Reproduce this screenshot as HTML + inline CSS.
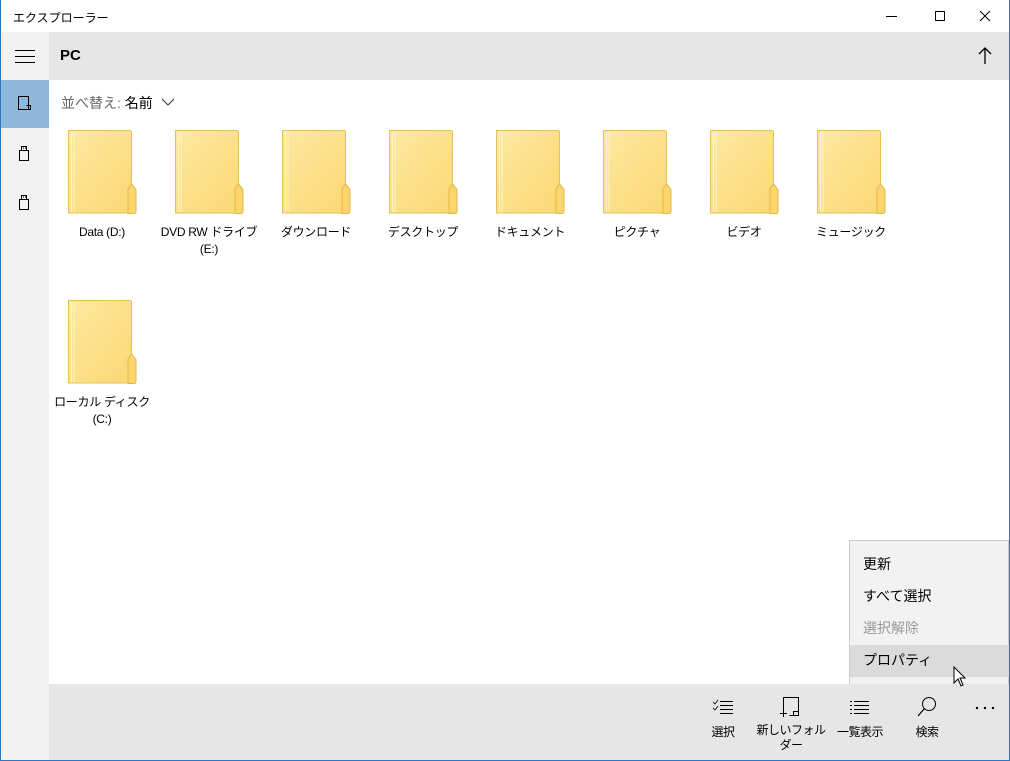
<!DOCTYPE html>
<html><head><meta charset="utf-8"><style>
*{margin:0;padding:0;box-sizing:border-box}
body{width:1010px;height:761px;overflow:hidden;background:#fff;font-family:"Liberation Sans","Noto Sans CJK JP",sans-serif;color:#000;position:relative}
.win{position:absolute;left:0;top:0;width:1010px;height:761px;border:1px solid #2b79c2;border-top:none}
.abs{position:absolute}
.title{left:13px;top:9px;font-size:12px}
.side{left:1px;top:32px;width:48px;height:728px;background:#f2f2f2}
.hdr{left:49px;top:32px;width:960px;height:48px;background:#e6e6e6}
.sel{left:1px;top:80px;width:48px;height:48px;background:#90b8da}
.fold{width:69px;height:85px}
.lbl{width:100px;font-size:12px;text-align:center;line-height:17px;letter-spacing:-0.3px;white-space:nowrap}
.bot{left:49px;top:684px;width:960px;height:76px;background:#e6e6e6}
.menu{left:849px;top:540px;width:160px;height:144px;background:#f2f2f2;border:1px solid #ccc;border-bottom:none}
.mi{position:absolute;left:13px;font-size:14px}
.bl{font-size:12px;text-align:center;position:absolute;white-space:nowrap;letter-spacing:-0.5px}
</style></head><body>
<div class="win"></div>
<div class="abs title">エクスプローラー</div>
<svg class="abs" style="left:880px;top:8px" width="120" height="18"><path d="M6 8.5h11" stroke="#000"/><rect x="55.5" y="3.5" width="9" height="9" fill="none" stroke="#000"/><path d="M100 3l10 10M110 3l-10 10" stroke="#000"/></svg>
<div class="abs side"></div>
<div class="abs hdr"></div>
<div class="abs sel"></div>
<svg class="abs" style="left:14px;top:48px" width="22" height="16"><path d="M1 2.5h20M1 8.5h20M1 14.5h20" stroke="#000"/></svg>
<svg class="abs" style="left:17px;top:95px" width="16" height="16"><path d="M1.5 1.5h10v13h-10z M9.5 10.5h4v4h-4" fill="none" stroke="#000"/></svg>
<svg class="abs" style="left:18px;top:145px" width="14" height="16"><path d="M3.5 1.5h5v4h-5z M1.5 5.5h9v10h-9z" fill="none" stroke="#000"/><path d="M5 3h1M7 3h1" stroke="#000"/></svg>
<svg class="abs" style="left:18px;top:194px" width="14" height="16"><path d="M3.5 1.5h5v4h-5z M1.5 5.5h9v10h-9z" fill="none" stroke="#000"/><path d="M5 3h1M7 3h1" stroke="#000"/></svg>
<div class="abs" style="left:60px;top:47px;font-size:15px;font-weight:bold">PC</div>
<svg class="abs" style="left:977px;top:47px" width="16" height="18"><path d="M8 1v16M2 7l6-6 6 6" fill="none" stroke="#000" stroke-width="1.3"/></svg>
<div class="abs" style="left:61px;top:93px;font-size:14px;color:#666">並べ替え: <span style="color:#000">名前</span></div>
<svg class="abs" style="left:161px;top:97px" width="14" height="10"><path d="M1 2l6 6 6-6" fill="none" stroke="#333"/></svg>

<svg width="0" height="0" style="position:absolute"><defs>
<linearGradient id="g" x1="0" y1="0" x2="1" y2="1"><stop offset="0" stop-color="#fde9a1"/><stop offset="1" stop-color="#fbd772"/></linearGradient>
<symbol id="f" viewBox="0 0 69 85"><path d="M0.5 0.5h61.5a1.5 1.5 0 0 1 1.5 1.5v52l4 5v24h-67z" fill="url(#g)" stroke="#e4c15a"/><path d="M3.5 2v80M6 2v80" stroke="#fff3c7" stroke-width="1"/><path d="M63.5 54l-3.5 5v24.5h6a2 2 0 0 0 2-2v-22z" fill="#fcd66a" stroke="#e0b84e"/></symbol>
</defs></svg>

<svg class="abs fold" style="left:68px;top:130px"><use href="#f"/></svg>
<svg class="abs fold" style="left:175px;top:130px"><use href="#f"/></svg>
<svg class="abs fold" style="left:282px;top:130px"><use href="#f"/></svg>
<svg class="abs fold" style="left:389px;top:130px"><use href="#f"/></svg>
<svg class="abs fold" style="left:496px;top:130px"><use href="#f"/></svg>
<svg class="abs fold" style="left:603px;top:130px"><use href="#f"/></svg>
<svg class="abs fold" style="left:710px;top:130px"><use href="#f"/></svg>
<svg class="abs fold" style="left:817px;top:130px"><use href="#f"/></svg>
<svg class="abs fold" style="left:68px;top:300px"><use href="#f"/></svg>

<div class="abs lbl" style="left:52px;top:224px">Data (D:)</div>
<div class="abs lbl" style="left:159px;top:224px">DVD RW ドライブ<br>(E:)</div>
<div class="abs lbl" style="left:266px;top:224px">ダウンロード</div>
<div class="abs lbl" style="left:373px;top:224px">デスクトップ</div>
<div class="abs lbl" style="left:480px;top:224px">ドキュメント</div>
<div class="abs lbl" style="left:587px;top:224px">ピクチャ</div>
<div class="abs lbl" style="left:694px;top:224px">ビデオ</div>
<div class="abs lbl" style="left:801px;top:224px">ミュージック</div>
<div class="abs lbl" style="left:52px;top:394px">ローカル ディスク<br>(C:)</div>

<div class="abs bot"></div>
<div class="abs menu">
<div class="abs" style="left:0;top:104px;width:159px;height:32px;background:#dadada"></div>
<div class="mi" style="top:13px">更新</div>
<div class="mi" style="top:45px">すべて選択</div>
<div class="mi" style="top:77px;color:#999">選択解除</div>
<div class="mi" style="top:109px">プロパティ</div>
</div>
<svg class="abs" style="left:953px;top:666px" width="14" height="22"><path d="M1 1v16l4-4 3 7 2-1-3-7h5z" fill="#fff" stroke="#000"/></svg>

<svg class="abs" style="left:712px;top:697px" width="24" height="20"><path d="M1 5l2 2 3-4M1 11l2 2 3-4" fill="none" stroke="#000" stroke-width=".8"/><path d="M8 4.5h13M8 8.5h13M8 12.5h13M8 16.5h13" stroke="#000"/></svg>
<div class="bl" style="left:703px;top:723px;width:40px">選択</div>
<svg class="abs" style="left:780px;top:696px" width="22" height="22"><path d="M3.5 14V1.5h15v18h-9" fill="none" stroke="#000"/><path d="M0 17.5h7M3.5 14v7" stroke="#000"/><rect x="13.5" y="15.5" width="5" height="4" fill="none" stroke="#000"/></svg>
<div class="bl" style="left:756px;top:723px;width:70px;line-height:15px">新しいフォル<br>ダー</div>
<svg class="abs" style="left:848px;top:697px" width="24" height="20"><path d="M2 4.5h2M2 8.5h2M2 12.5h2M2 16.5h2M6 4.5h15M6 8.5h15M6 12.5h15M6 16.5h15" stroke="#000"/></svg>
<div class="bl" style="left:826px;top:723px;width:68px">一覧表示</div>
<svg class="abs" style="left:916px;top:696px" width="22" height="22"><circle cx="13" cy="8" r="6.5" fill="none" stroke="#000"/><path d="M8.5 12.5L2 20" stroke="#000" stroke-width="1.2"/></svg>
<div class="bl" style="left:907px;top:723px;width:40px">検索</div>
<svg class="abs" style="left:974px;top:705px" width="24" height="6"><circle cx="3" cy="3" r="1.2"/><circle cx="11" cy="3" r="1.2"/><circle cx="19" cy="3" r="1.2"/></svg>
</body></html>
